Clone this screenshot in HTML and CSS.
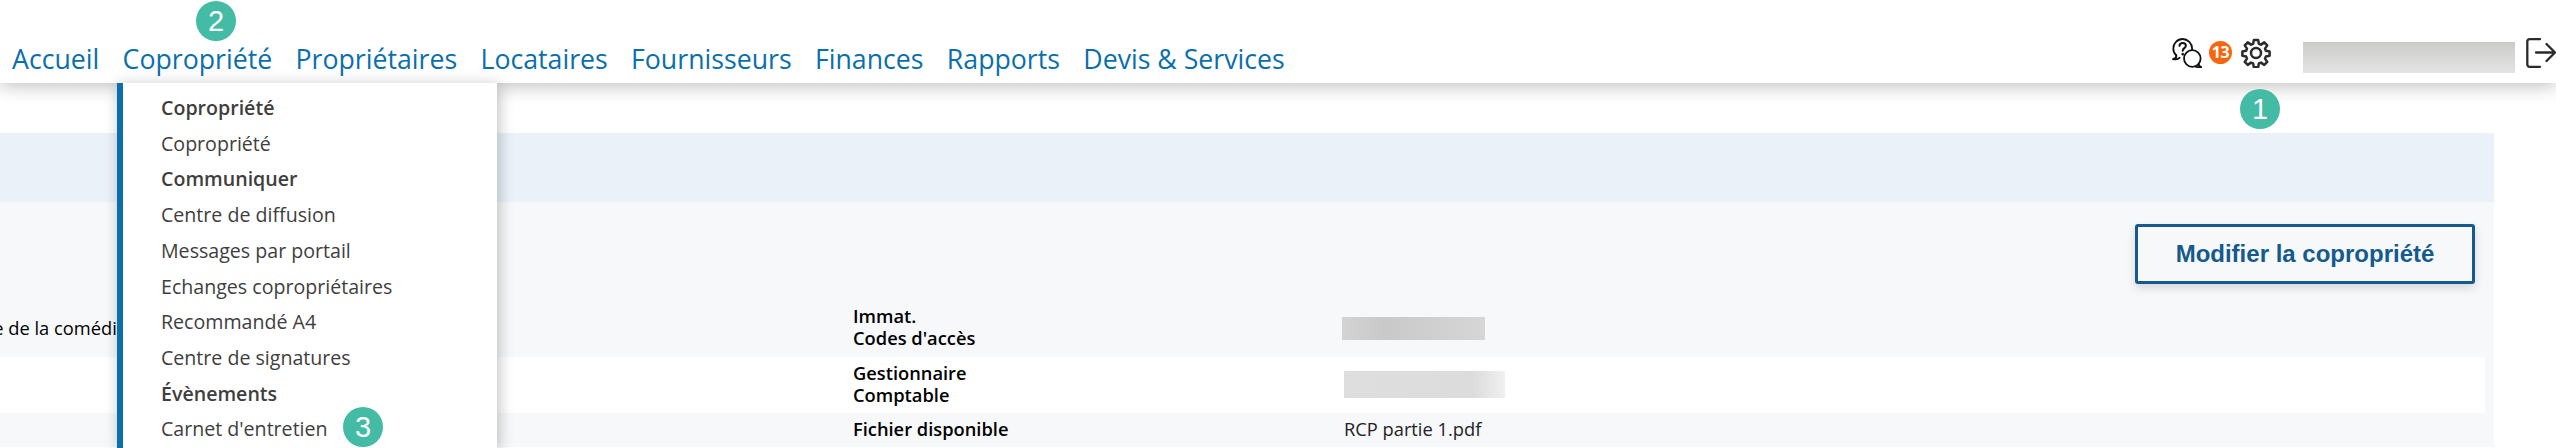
FILE: index.html
```html
<!DOCTYPE html>
<html lang="fr">
<head>
<meta charset="utf-8">
<title>Copropriété</title>
<link rel="stylesheet" href="styles.css">
</head>
<body>
<header class="topbar">
  <nav class="nav">
    <a>Accueil</a>
    <a>Copropriété</a>
    <a>Propriétaires</a>
    <a>Locataires</a>
    <a>Fournisseurs</a>
    <a>Finances</a>
    <a>Rapports</a>
    <a>Devis &amp; Services</a>
  </nav>
  <div class="tools">
    <svg class="icon" viewBox="0 0 30 30" fill="none" stroke="#111" stroke-width="1.800" stroke-linejoin="round" stroke-linecap="round">
      <path d="M4.300 17.300C2.300 15.600 1.300 13.400 1.300 10.500 1.300 5.400 5.400 1 10.600 1s9.500 4.400 9.500 9.500c0 .8-.1 1.500-.3 2.200"/>
      <path d="M4.300 17.300c.2 1.700-.6 3.300-3.300 3.900 2.700.6 5-.2 6.600-1.500"/>
      <circle cx="20.300" cy="20.500" r="8.300" fill="#fff"/>
      <path d="M26.700 25.800c-.1 1.300.5 2.700 2.600 3.400-2.400.4-4.500 0-6-1"/>
      <path d="M7.400 7.800c.3-1.800 1.600-2.800 3.300-2.800 1.800 0 3.200 1.100 3.200 2.800 0 2.400-3.200 2.300-3.200 4.900" stroke-width="2"/>
      <path d="M10.700 16v.3" stroke-width="2.400"/>
    </svg>
    <span class="count">13</span>
    <svg class="icon gear" viewBox="0 0 24 24" fill="none" stroke="#2b2b2b" stroke-width="2" stroke-linejoin="round" stroke-linecap="round">
      <circle cx="12" cy="12" r="4"/>
      <path d="M10.300 1.500h3.400l.6 3.100 1.700.7 2.600-1.800 2.400 2.400-1.800 2.600.7 1.700 3 .6v3.400l-3 .6-.7 1.700 1.800 2.600-2.400 2.400-2.600-1.800-1.700.7-.6 3h-3.400l-.6-3-1.700-.7-2.600 1.800-2.400-2.400 1.800-2.600-.7-1.700-3-.6v-3.400l3-.6.7-1.700-1.800-2.600 2.400-2.400 2.600 1.800 1.700-.7z"/>
    </svg>
    <div class="blur blur-user"></div>
    <svg class="icon logout" viewBox="0 0 30 30" fill="none" stroke="#2b2b2b" stroke-width="2.300" stroke-linejoin="round" stroke-linecap="round">
      <path d="M14 1.200H3.500a2.200 2.200 0 0 0-2.200 2.200v23.200a2.200 2.200 0 0 0 2.200 2.200H14"/>
      <path d="M10 14.500h19M20.500 6l8.500 8.500-8.500 8.500"/>
    </svg>
  </div>
</header>

<main class="main">
  <div class="band"></div>
  <section class="panel">
    <div class="actions"><button class="edit">Modifier la copropriété</button></div>
    <div class="row row-a">
      <div class="cell-left"><span class="clipped">Résidence de la comédie</span></div>
      <div class="cell-label">Immat.<br>Codes d'accès</div>
      <div class="cell-value"><div class="blur blur-a"></div></div>
    </div>
    <div class="row row-b">
      <div class="cell-left"></div>
      <div class="cell-label">Gestionnaire<br>Comptable</div>
      <div class="cell-value"><div class="blur blur-b"></div></div>
    </div>
    <div class="row row-c">
      <div class="cell-left"></div>
      <div class="cell-label">Fichier disponible</div>
      <div class="cell-value">RCP partie 1.pdf</div>
    </div>
  </section>
</main>

<div class="menu">
  <div class="menu-h">Copropriété</div>
  <div class="menu-i">Copropriété</div>
  <div class="menu-h">Communiquer</div>
  <div class="menu-i">Centre de diffusion</div>
  <div class="menu-i">Messages par portail</div>
  <div class="menu-i">Echanges copropriétaires</div>
  <div class="menu-i">Recommandé A4</div>
  <div class="menu-i">Centre de signatures</div>
  <div class="menu-h">Évènements</div>
  <div class="menu-i">Carnet d'entretien</div>
</div>

<span class="step step-1">1</span>
<span class="step step-2">2</span>
<span class="step step-3">3</span>
</body>
</html>
```
FILE: styles.css
```css
* { box-sizing: border-box; }
html, body { margin: 0; padding: 0; height: 448px; overflow: hidden; background: #fff; }
body { font-family: "Open Sans", "Liberation Sans", sans-serif; position: relative; }

.topbar {
  position: relative;
  z-index: 2;
  height: 83px;
  background: #fff;
  display: flex;
  align-items: flex-end;
  justify-content: space-between;
  box-shadow: 0 2px 18px rgba(0,0,0,.28);
}
.nav { display: flex; gap: 23.300px; padding-left: 12px; padding-bottom: 6px; }
.nav a { font-size: 26.700px; line-height: 36px; font-weight: 500; color: #0a6fab; white-space: nowrap; }

.tools { display: flex; align-items: flex-start; height: 45px; position: absolute; top: 38px; left: 2172px; }
.icon { width: 30px; height: 30px; display: block; flex: none; }
.count {
  width: 23px; height: 23px; margin: 3px 9px 0 7px; border-radius: 50%;
  background: #f9650e; color: #fff; font-size: 16px; font-weight: 700;
  line-height: 23px; text-align: center; flex: none; letter-spacing: -.5px;
}
.gear { margin-right: 32px; }
.logout { margin-left: 11px; }

.blur { filter: blur(.5px); }
.blur-user { width: 212px; height: 31px; margin-top: 4px; background: linear-gradient(180deg,#cbcbca,#e4e4e4); flex: none; }
.blur-a { width: 143px; height: 23px; background: linear-gradient(90deg,#d3d3d3,#c9c9c9 30%,#d6d6d6); margin-left: -2px; }
.blur-b { width: 161px; height: 27px; background: linear-gradient(90deg,#dedede,#dcdcdc 80%,#f0f0f0); }

.main { padding-top: 50px; width: 2494px; }
.band { height: 69px; background: #eaf1f9; }
.panel { background: #f7f8fa; padding-right: 9px; height: 245px; }
.actions { height: 131px; padding: 22px 10px 0 0; display: flex; justify-content: flex-end; align-items: flex-start; }
.edit {
  width: 340px; height: 60px; background: #f7f8fa; border: 3px solid #155a8c; border-radius: 3px;
  color: #155a8c; font: 700 24px "Liberation Sans", Arial, sans-serif;
  box-shadow: 0 4px 10px rgba(0,0,0,.14);
}

.row { display: flex; align-items: center; font-size: 18.300px; line-height: 22px; }
.row-a { height: 24px; align-items: flex-end; position: relative; }
.row-b { height: 56px; background: #fff; padding-bottom: 2px; }
.row-c { height: 34px; padding-bottom: 2px; }
.cell-left { width: 853px; flex: none; position: relative; }
.cell-label { width: 491px; flex: none; font-weight: 600; color: #000; }
.cell-value { color: #222; }

.row-a .cell-left { align-self: flex-start; }
.row-a .cell-label { margin-bottom: 8px; }
.row-a .cell-value { margin-bottom: 17px; }
.clipped { display: block; margin-left: -83px; margin-top: -16px; white-space: nowrap; color: #000; }

.menu {
  position: absolute; z-index: 3; left: 117px; top: 83px; width: 380px; height: 365px;
  background: #fff; border-left: 6px solid #0a6fab; padding: 7px 0 0 38px;
  box-shadow: 2px 2px 14px rgba(0,0,0,.25);
}
.menu-h, .menu-i { font-size: 19.600px; line-height: 35.700px; color: #3e3e3e; white-space: nowrap; }
.menu-h { font-weight: 600; }

.step {
  position: absolute; z-index: 4; width: 40px; height: 40px; border-radius: 50%;
  background: #43bba5; color: #fff; font: 400 29px/40px "Liberation Sans", Arial, sans-serif; text-align: center;
}
.step-1 { left: 2240px; top: 89px; }
.step-2 { left: 196px; top: 1px; }
.step-3 { left: 343px; top: 407px; }
```
